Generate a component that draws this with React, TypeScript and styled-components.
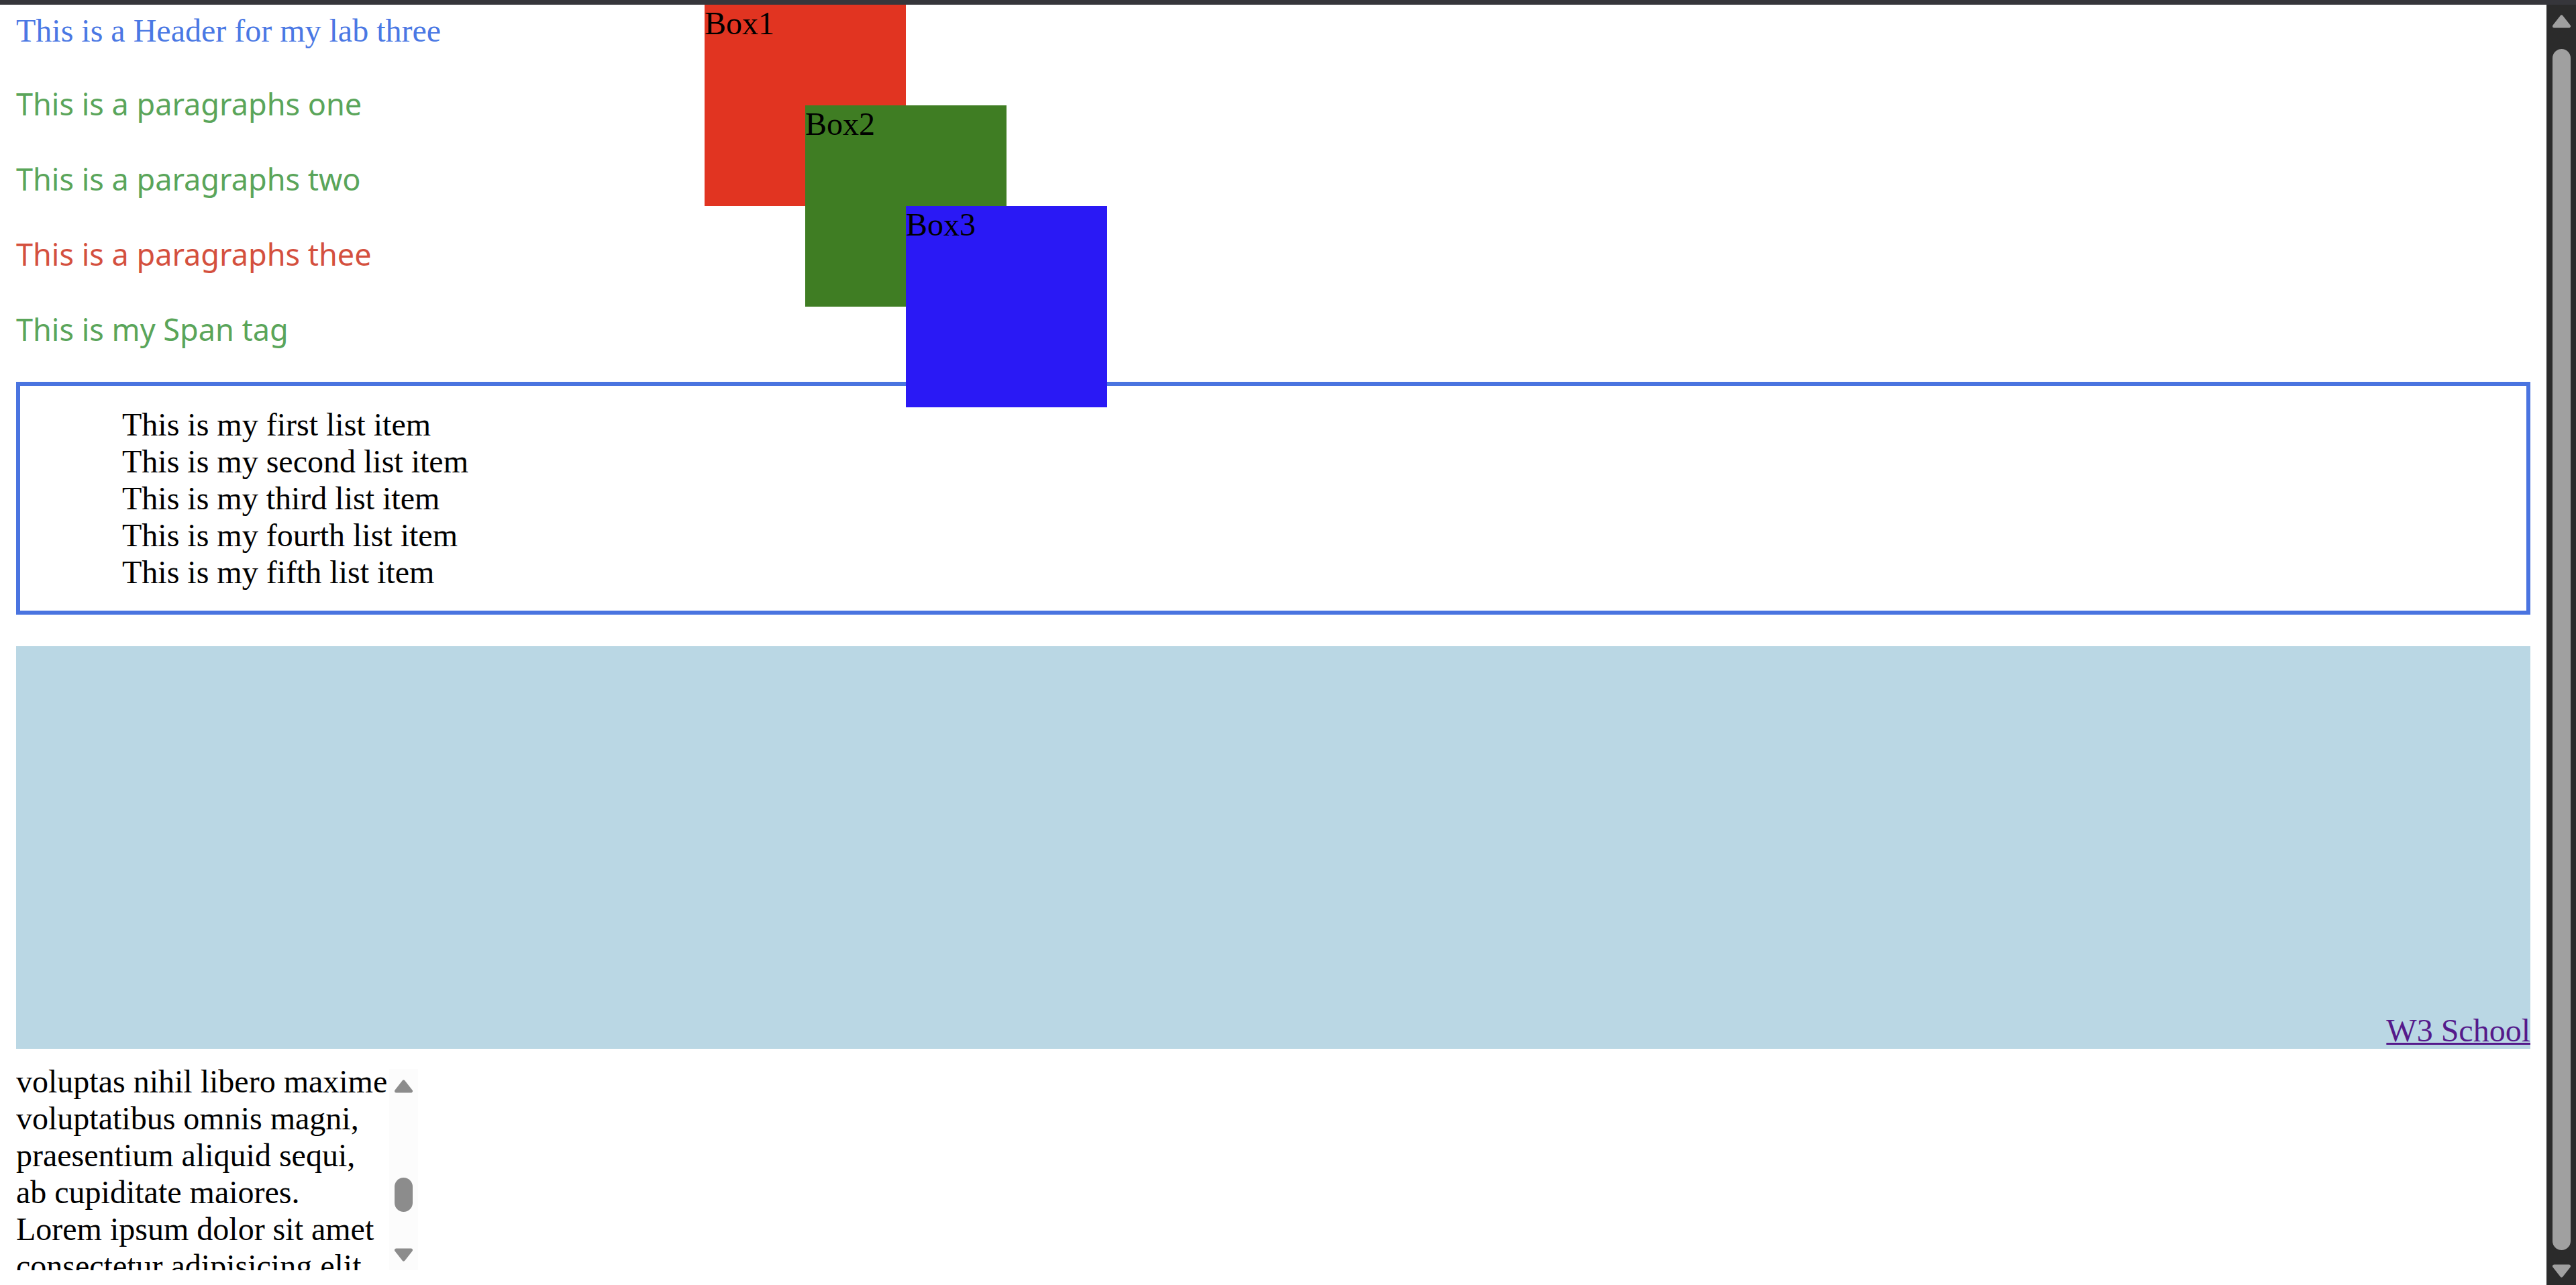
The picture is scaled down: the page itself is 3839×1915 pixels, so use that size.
import React, { useLayoutEffect, useRef } from 'react';
import styled, { createGlobalStyle } from 'styled-components';

const LINE = 55;

const GlobalStyle = createGlobalStyle`
  html, body {
    margin: 0;
    height: 100%;
    overflow: hidden;
    background: #ffffff;
  }
  body {
    font-family: "Liberation Serif", "Times New Roman", serif;
    font-size: 48px;
    color: #000000;
  }
  #root {
    height: 100%;
  }
`;

const Shell = styled.div`
  height: 100vh;
  display: flex;
  flex-direction: column;
`;

const TopStrip = styled.div`
  height: 7px;
  flex-shrink: 0;
  background: #36363b;
`;

const Screen = styled.div`
  flex: 1;
  min-height: 0;
  display: flex;
`;

const Page = styled.main`
  flex: 1;
  min-width: 0;
  position: relative;
  overflow: hidden;
  padding: 0 24px 24px;
`;

// scrollbar drawn by hand: the headless browser paints none
type Tone = { track: string; thumb: string };

const Track = styled.div<{ $tone: Tone; $width: number }>`
  width: ${({ $width }) => $width}px;
  flex-shrink: 0;
  display: flex;
  flex-direction: column;
  background: ${({ $tone }) => $tone.track};
`;

const StepButton = styled.div<{ $offset: number; $inset: number }>`
  height: 45px;
  flex-shrink: 0;
  box-sizing: border-box;
  padding: ${({ $offset, $inset }) => `${$offset}px 0 0 ${$inset}px`};

  & > svg {
    display: block;
  }
`;

const Rail = styled.div`
  flex: 1;
  min-height: 0;
`;

const Thumb = styled.div<{ $tone: Tone; $inset: number; $top: number; $size: number }>`
  margin: ${({ $top, $inset }) => `${$top}px 0 0 ${$inset}px`};
  width: 27px;
  height: ${({ $size }) => $size}px;
  border-radius: 14px;
  background: ${({ $tone }) => $tone.thumb};
`;

const Arrow: React.FC<{ dir: 'up' | 'down'; color: string }> = ({ dir, color }) => (
  <svg width="27" height="20" viewBox="0 0 27 20">
    <polygon
      points={dir === 'up' ? '13.5,3 24.5,17 2.5,17' : '2.5,3 24.5,3 13.5,17'}
      fill={color}
      stroke={color}
      strokeWidth="5"
      strokeLinejoin="round"
    />
  </svg>
);

interface ScrollbarProps {
  tone: Tone;
  width: number;
  inset: number;
  upOffset: number;
  downOffset: number;
  thumbTop: number;
  thumbSize: number;
}

const Scrollbar: React.FC<ScrollbarProps> = ({ tone, width, inset, upOffset, downOffset, thumbTop, thumbSize }) => (
  <Track $tone={tone} $width={width}>
    <StepButton $offset={upOffset} $inset={inset}>
      <Arrow dir="up" color={tone.thumb} />
    </StepButton>
    <Rail>
      <Thumb $tone={tone} $inset={inset} $top={thumbTop} $size={thumbSize} />
    </Rail>
    <StepButton $offset={downOffset} $inset={inset}>
      <Arrow dir="down" color={tone.thumb} />
    </StepButton>
  </Track>
);

const Header = styled.header`
  margin-top: 11px;
  line-height: ${LINE}px;
  color: #4a78e4;
`;

const Paragraph = styled.p<{ $color: string }>`
  margin: 48px 0 0;
  padding-top: 3px;
  font-family: "Segoe UI", "Noto Sans", sans-serif;
  font-size: 45px;
  line-height: 61px;
  color: ${({ $color }) => $color};
`;

const Box = styled.div<{ $left: number; $top: number; $bg: string }>`
  position: absolute;
  left: ${({ $left }) => $left}px;
  top: ${({ $top }) => $top}px;
  width: 300px;
  height: 300px;
  line-height: ${LINE}px;
  background: ${({ $bg }) => $bg};
`;

const List = styled.ul`
  margin: 48px 0 0;
  padding: 30px 0 30px 152px;
  border: 6px solid #4a74e0;
  list-style: none;
  line-height: ${LINE}px;
`;

const Banner = styled.section`
  margin-top: 47px;
  height: 600px;
  background: #bad7e4;
  display: flex;
  justify-content: flex-end;
  align-items: flex-end;
`;

const Link = styled.a`
  line-height: ${LINE}px;
  color: #551a8b;
  text-decoration: underline;
  text-decoration-thickness: 3px;
`;

const TextBox = styled.div`
  margin-top: 30px;
  width: 599px;
  height: 300px;
  display: flex;
`;

const TextScroll = styled.div`
  width: 556px;
  flex-shrink: 0;
  overflow: hidden;
  line-height: ${LINE}px;

  & > p {
    margin: 0;
  }
`;

const darkTone: Tone = { track: '#2b2b2b', thumb: '#a0a0a0' };
const lightTone: Tone = { track: '#fcfcfc', thumb: '#8c8c8c' };

const boxes = [
  { label: 'Box1', left: 1050, top: 0, bg: '#e13421' },
  { label: 'Box2', left: 1200, top: 150, bg: '#3f7d23' },
  { label: 'Box3', left: 1350, top: 300, bg: '#2a19f5' },
];

const items = ['first', 'second', 'third', 'fourth', 'fifth'];

const lead =
  'Lorem ipsum dolor sit amet consectetur adipisicing elit. Quod laudantium illum, natus doloribus sapiente eaque reprehenderit, voluptas nihil libero maxime voluptatibus omnis magni.';
const body =
  'Lorem ipsum dolor sit amet consectetur adipisicing elit. Quod laudantium illum, natus doloribus sapiente eaque reprehenderit, voluptas nihil libero maxime voluptatibus omnis magni, praesentium aliquid sequi, ab cupiditate maiores. Lorem ipsum dolor sit amet consectetur adipisicing elit. Quod laudantium illum, natus doloribus sapiente eaque reprehenderit, voluptas nihil libero.';

const App: React.FC = () => {
  const textRef = useRef<HTMLDivElement>(null);

  useLayoutEffect(() => {
    if (textRef.current) textRef.current.scrollTop = LINE * 12 + 9;
  }, []);

  return (
    <Shell>
      <GlobalStyle />
      <TopStrip />
      <Screen>
        <Page>
          <Header>This is a Header for my lab three</Header>
          <Paragraph $color="#5aa55a">This is a paragraphs one</Paragraph>
          <Paragraph $color="#5aa55a">This is a paragraphs two</Paragraph>
          <Paragraph $color="#d4503e">This is a paragraphs thee</Paragraph>
          <Paragraph as="div" $color="#5aa55a">
            <span>This is my Span tag</span>
          </Paragraph>

          {boxes.map((b) => (
            <Box key={b.label} $left={b.left} $top={b.top} $bg={b.bg}>
              {b.label}
            </Box>
          ))}

          <List>
            {items.map((n) => (
              <li key={n}>This is my {n} list item</li>
            ))}
          </List>

          <Banner>
            <Link href="#">W3 School</Link>
          </Banner>

          <TextBox>
            <TextScroll ref={textRef}>
              <p>{lead}</p>
              <p>{body}</p>
            </TextScroll>
            <Scrollbar
              tone={lightTone}
              width={43}
              inset={8}
              upOffset={16}
              downOffset={12}
              thumbTop={117}
              thumbSize={51}
            />
          </TextBox>
        </Page>
        <Scrollbar
          tone={darkTone}
          width={44}
          inset={9}
          upOffset={15}
          downOffset={14}
          thumbTop={21}
          thumbSize={1790}
        />
      </Screen>
    </Shell>
  );
};

export default App;
